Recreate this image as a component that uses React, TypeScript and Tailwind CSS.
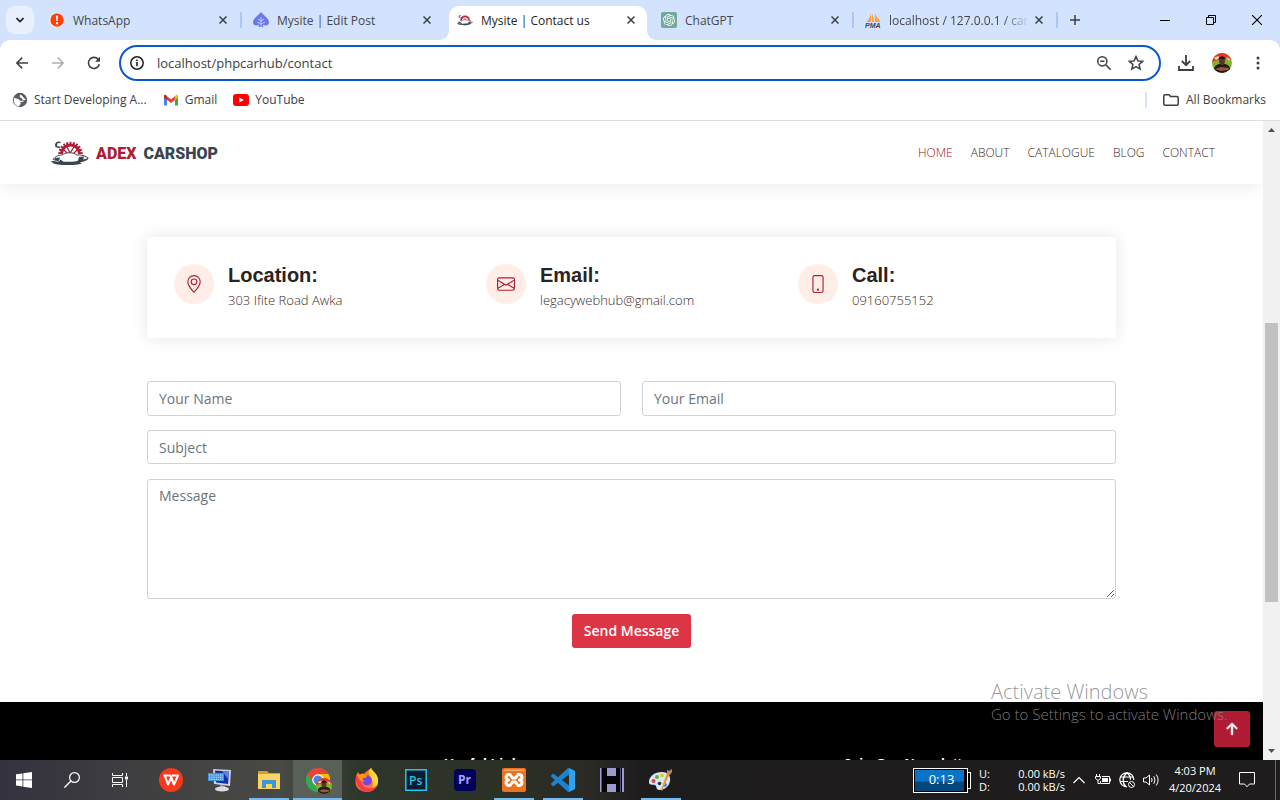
import type { ReactNode } from "react";
import { BsArrowUpShort, BsEnvelope, BsGeoAlt, BsPhone } from "react-icons/bs";
import { SiOpenai } from "react-icons/si";

/* ---------- shared drawings ---------- */

function CarLogo({ className }: { className: string }) {
  return (
    <svg viewBox="0 0 38 24" className={className} aria-hidden="true">
      <path d="M9 13a10.500 10.500 0 0 1 21 0" fill="none" stroke="#b01c33" strokeWidth="3.500" strokeDasharray="1.800 1.300" />
      <path d="M10.500 13a9 9 0 0 1 18 0" fill="none" stroke="#b01c33" strokeWidth="3" />
      <path d="M16 6l3 6 4-6M13 9l4 4M26 9l-4 4" fill="none" stroke="#b01c33" strokeWidth="1.300" />
      <path d="M9.500 1.500C6 .5 3.500 3 5.500 5.500M6 1.500l-1 4 4 1" fill="none" stroke="#3b4350" strokeWidth="1.400" />
      <path d="M1 20c0-4 5-6 9-6 4-3 12-3 16 0 5 0 9 1 11 3-2 3-5 4-9 4z" fill="#fff" />
      <path d="M2 19c1-3 5-5 9-5 4-3 11-3 15 0 4-.5 9 1 11 3" fill="none" stroke="#3b4350" strokeWidth="1" />
      <path d="M0 20c3 0 5 .3 8 .6l1.500-2.200 3 2.400c5 .2 10-.2 14-.9l2-2.200 2.500 1c3-.7 5-1.200 7-2.200-1 3-5 4-9 5l2 1c-8 2.300-21 2.300-29-.3z" fill="#3b4350" />
      <path d="M4 17l5-.5-1 3.500-5-.5zM28 16l5-.5-1 4-5 .5z" fill="#3b4350" />
    </svg>
  );
}

function Avatar({ className }: { className: string }) {
  return (
    <svg viewBox="0 0 20 20" className={className} aria-hidden="true">
      <clipPath id="round">
        <circle cx="10" cy="10" r="10" />
      </clipPath>
      <g clipPath="url(#round)">
        <path d="M0 0h20v20H0z" fill="#7fb52b" />
        <path d="M0 0h20v7l-6-2-5 1-9 3z" fill="#e5362c" />
        <path d="M2 5l4-2 2 2-4 2zM14 4l4 2-1 2z" fill="#f3c9bd" />
        <path d="M2 20c-1-5 1-8 5-9h6c5 1 6 5 5 9z" fill="#241a1c" />
        <path d="M3 16l6-2 8 1-1 2-7 1z" fill="#99583c" />
        <ellipse cx="10" cy="8" rx="3" ry="4" fill="#5e3426" />
        <path d="M6.500 7c0-5 7-5 7 0l-1-1h-5z" fill="#1c1213" />
      </g>
    </svg>
  );
}

/* ---------- browser chrome ---------- */

function CloseIcon() {
  return (
    <svg viewBox="0 0 8 8" className="size-2" aria-hidden="true">
      <path d="M.5.5l7 7M7.500.5l-7 7" stroke="#3c3f43" strokeWidth="1.500" />
    </svg>
  );
}

function WhatsAppAlert() {
  return (
    <svg viewBox="0 0 16 16" className="size-4">
      <circle cx="8" cy="8" r="7.500" fill="#fff" />
      <circle cx="8" cy="8" r="6.700" fill="#ff4008" />
      <path d="M7 3.500h2l-.3 5.500H7.300zM7 10.300h2v2H7z" fill="#fff" />
    </svg>
  );
}

function LeafIcon() {
  return (
    <svg viewBox="0 0 16 16" className="size-4">
      <path d="M8 0c1.500 2.500 8 6 8 10.200 0 3-3.500 4.300-6 2.600L10.500 15h-5l.5-2.200c-2.500 1.700-6 .4-6-2.600C0 6 6.500 2.500 8 0z" fill="#6a78e8" />
      <path d="M8 5v10M8 9L5 7M8 9l3-2M8 12l-4-2M8 12l4-2" stroke="#c6d0fb" strokeWidth=".9" fill="none" />
    </svg>
  );
}

function GptIcon() {
  return (
    <span className="flex size-4 items-center justify-center rounded-xs bg-[#74aa9c]">
      <SiOpenai className="size-3 text-white" />
    </span>
  );
}

function PmaIcon() {
  return (
    <svg viewBox="0 0 16 16" className="size-4">
      <path d="M6 1v9H1c3-2 4-5 5-9zM7 1c1 3 2 6 2 9H7zM10 2c2 2 3 5 3 8h-3zM13 5l2 5h-2z" fill="#f7a13c" />
      <text x="0" y="15.500" fontSize="7" fontWeight="700" fontStyle="italic" fontFamily="Liberation Sans, sans-serif" fill="#43425c">
        PMA
      </text>
    </svg>
  );
}

type TabInfo = { title: string; icon: ReactNode; active?: boolean; divider?: boolean; fade?: boolean };

const tabs: TabInfo[] = [
  { title: "WhatsApp", icon: <WhatsAppAlert />, divider: true },
  { title: "Mysite | Edit Post", icon: <LeafIcon /> },
  { title: "Mysite | Contact us", icon: <CarLogo className="h-3 w-4" />, active: true },
  { title: "ChatGPT", icon: <GptIcon />, divider: true },
  { title: "localhost / 127.0.0.1 / car", icon: <PmaIcon />, divider: true, fade: true },
];

function Tab({ tab }: { tab: TabInfo }) {
  return (
    <div className="relative flex max-w-[204px] min-w-0 flex-1 self-stretch px-[3px] pt-1.5">
      {tab.active && (
        <>
          <span className="absolute -right-[7px] bottom-0 size-2.5 bg-[radial-gradient(circle_at_100%_0,#d3e3fd_10px,#fff_10px)]" />
          <span className="absolute bottom-0 -left-[7px] size-2.5 bg-[radial-gradient(circle_at_0_0,#d3e3fd_10px,#fff_10px)]" />
        </>
      )}
      <div className={`flex min-w-0 flex-1 items-center px-2 pb-1.5 ${tab.active ? "rounded-t-[10px] bg-white text-[#1f1f1f]" : "text-[#44474b]"}`}>
        <span className="flex w-4 shrink-0 items-center justify-center">{tab.icon}</span>
        <span
          className={`ml-2 min-w-0 flex-1 pt-0.5 text-xs whitespace-nowrap ${tab.fade ? "[mask-image:linear-gradient(to_right,#000_80%,transparent)]" : ""}`}
        >
          {tab.title}
        </span>
        <button type="button" aria-label={`Close ${tab.title}`} className="flex size-4 shrink-0 items-center justify-center">
          <CloseIcon />
        </button>
      </div>
      {tab.divider && <span className="absolute top-3 right-0 h-4 w-0.5 bg-[#a8c7fa]" />}
    </div>
  );
}

function TabStrip() {
  return (
    <div className="flex h-10 shrink-0 items-center bg-[#d3e3fd] pl-1.5">
      <button type="button" aria-label="Search tabs" className="mr-1 flex size-7 items-center justify-center rounded-[9px] bg-[#e9f1fe]">
        <svg viewBox="0 0 8 6" className="h-1.5 w-2">
          <path d="M.5 1L4 4.500 7.500 1" fill="none" stroke="#1f1f1f" strokeWidth="1.600" />
        </svg>
      </button>
      {tabs.map((tab) => (
        <Tab key={tab.title} tab={tab} />
      ))}
      <button type="button" aria-label="New tab" className="ml-[7px] flex size-5 items-center justify-center">
        <svg viewBox="0 0 10 10" className="size-2.5">
          <path d="M5 0v10M0 5h10" stroke="#3c3f43" strokeWidth="1.500" />
        </svg>
      </button>
      <div className="ml-auto flex self-stretch">
        <button type="button" aria-label="Minimize" className="flex w-[46px] items-center justify-center">
          <svg viewBox="0 0 10 10" className="size-2.5">
            <path d="M0 5.500h10" stroke="#000" />
          </svg>
        </button>
        <button type="button" aria-label="Restore" className="flex w-[46px] items-center justify-center">
          <svg viewBox="0 0 10 10" className="size-2.5">
            <path d="M.5 2.500h7v7h-7zM2.500 2.500v-2h7v7h-2" fill="none" stroke="#000" />
          </svg>
        </button>
        <button type="button" aria-label="Close window" className="flex w-[46px] items-center justify-center">
          <svg viewBox="0 0 10 10" className="size-2.5">
            <path d="M0 0l10 10M10 0L0 10" stroke="#000" strokeWidth="1.100" />
          </svg>
        </button>
      </div>
    </div>
  );
}

function Toolbar() {
  return (
    <div className="bg-[#d3e3fd]">
      <div className="flex items-center rounded-t-[10px] bg-white pt-[5px] pr-2.5 pl-1.5">
        <button type="button" aria-label="Back" className="flex size-8 items-center justify-center">
          <svg viewBox="0 0 12 12" className="size-3">
            <path d="M12 6H1M6.200.6L.9 6l5.300 5.400" fill="none" stroke="#3c3f43" strokeWidth="1.500" />
          </svg>
        </button>
        <button type="button" aria-label="Forward" className="ml-1 flex size-8 items-center justify-center">
          <svg viewBox="0 0 12 12" className="size-3">
            <path d="M0 6h11M5.800.6L11.100 6l-5.300 5.400" fill="none" stroke="#aeb0b3" strokeWidth="1.500" />
          </svg>
        </button>
        <button type="button" aria-label="Reload" className="ml-1 flex size-8 items-center justify-center">
          <svg viewBox="0 0 14 14" className="size-3.5">
            <path d="M12.300 8.200A5.500 5.500 0 1 1 11.500 3.800" fill="none" stroke="#3c3f43" strokeWidth="1.600" />
            <path d="M13 .8v5H8z" fill="#3c3f43" />
          </svg>
        </button>
        <div className="ml-[9px] flex h-9 min-w-0 flex-1 items-center rounded-full border-2 border-[#0b57d0] pr-[11px] pl-[9px]">
          <svg viewBox="0 0 14 14" className="size-3.5 shrink-0" aria-hidden="true">
            <circle cx="7" cy="7" r="6.200" fill="none" stroke="#1f1f1f" strokeWidth="1.500" />
            <path d="M7 6v4.300M7 3.400V5" stroke="#1f1f1f" strokeWidth="1.600" />
          </svg>
          <input
            aria-label="Address"
            defaultValue="localhost/phpcarhub/contact"
            className="ml-[13px] block h-5 min-w-0 flex-1 bg-transparent text-[13px] leading-5 text-[#3c4043] outline-none"
          />
          <svg viewBox="0 0 16 16" className="size-4 shrink-0" aria-hidden="true">
            <circle cx="6.300" cy="6.300" r="4.600" fill="none" stroke="#3c3f43" strokeWidth="1.500" />
            <path d="M9.700 9.700l5 5M4.200 6.300h4.200" stroke="#3c3f43" strokeWidth="1.600" />
          </svg>
          <svg viewBox="0 0 16 16" className="mr-1 ml-4 size-4 shrink-0" aria-hidden="true">
            <path d="M8 1.600l1.900 4.300 4.700.5-3.500 3.100 1 4.600L8 11.700l-4.100 2.400 1-4.600L1.400 6.400l4.700-.5z" fill="none" stroke="#3c3f43" strokeWidth="1.500" />
          </svg>
        </div>
        <button type="button" aria-label="Downloads" className="ml-4 flex size-[18px] items-center justify-center">
          <svg viewBox="0 0 16 16" className="size-4">
            <path d="M8 0v10M3.800 6L8 10.200 12.200 6M1 11v4h14v-4" fill="none" stroke="#3c3f43" strokeWidth="1.800" />
          </svg>
        </button>
        <button type="button" aria-label="Profile" className="ml-[17px]">
          <Avatar className="size-5" />
        </button>
        <button type="button" aria-label="Menu" className="ml-3.5 flex h-5 w-6 items-center justify-center">
          <svg viewBox="0 0 4 14" className="h-3.5 w-1">
            <circle cx="2" cy="2" r="1.500" fill="#3c3f43" />
            <circle cx="2" cy="7" r="1.500" fill="#3c3f43" />
            <circle cx="2" cy="12" r="1.500" fill="#3c3f43" />
          </svg>
        </button>
      </div>
    </div>
  );
}

function Bookmarks() {
  return (
    <div className="flex h-10 shrink-0 items-center border-b border-[#dedfe1] bg-white pr-3.5 pb-0.5 pl-3 text-xs text-[#3c3f43]">
      <a href="#start" className="flex items-center gap-1.5">
        <svg viewBox="0 0 16 16" className="size-4" aria-hidden="true">
          <circle cx="8" cy="8" r="7.200" fill="#5a5d61" />
          <path d="M2.500 6.500l3.500 1c1 .3 1 1.500 2 1.700v2.600l-1.500 2C4 13 2 10.500 2.500 6.500zM9 2.800c-1.500 1.500-.5 2.500 1 2.700.8.600.5 2 2 2.200l1.500-.2M8.500 9.500l3-.3" fill="#fff" stroke="#fff" strokeWidth="1.200" />
        </svg>
        Start Developing A...
      </a>
      <a href="#gmail" className="ml-4 flex items-center gap-1.5">
        <svg viewBox="0 0 16 12" className="h-3 w-4" aria-hidden="true">
          <path d="M1 2v9.500h3V5z" fill="#4285f4" />
          <path d="M15 2v9.500h-3V5z" fill="#34a853" />
          <path d="M12 2.200V6l3-2.300V2c0-1.400-1.600-2.100-3 0z" fill="#fbbc04" />
          <path d="M4 2.200l4 3 4-3V6L8 9 4 6z" fill="#ea4335" />
          <path d="M4 2.200V6L1 3.700V2C1 .6 2.600-.1 4 2.200z" fill="#c5221f" />
        </svg>
        Gmail
      </a>
      <a href="#youtube" className="ml-4 flex items-center gap-1.5">
        <svg viewBox="0 0 16 12" className="h-3 w-4" aria-hidden="true">
          <rect width="16" height="12" rx="3" fill="#f00" />
          <path d="M6.300 3.400v5.200L10.800 6z" fill="#fff" />
        </svg>
        YouTube
      </a>
      <span className="ml-auto h-4 w-0.5 bg-[#d3e3fd]" />
      <button type="button" className="ml-4 flex items-center gap-[7px]">
        <svg viewBox="0 0 16 12" className="h-3 w-4" aria-hidden="true">
          <path d="M.8 10V2Q.8.800 2 .8h4l1.500 1.700H14q1.200 0 1.200 1.200V10q0 1.200-1.200 1.200H2Q.8 11.200.8 10z" fill="none" stroke="#3c3f43" strokeWidth="1.500" />
        </svg>
        All Bookmarks
      </button>
    </div>
  );
}

/* ---------- website ---------- */

const links = ["HOME", "ABOUT", "CATALOGUE", "BLOG", "CONTACT"];

const contacts = [
  { label: "Location:", value: "303 Ifite Road Awka", Icon: BsGeoAlt },
  { label: "Email:", value: "legacywebhub@gmail.com", Icon: BsEnvelope },
  { label: "Call:", value: "09160755152", Icon: BsPhone },
];

const field =
  "block w-full rounded-[3px] border border-[#ced4da] bg-white px-[11px] text-sm text-[#212529] placeholder:text-[#6c757d] outline-none";

function Site() {
  return (
    <div className="relative flex min-w-0 flex-1 flex-col overflow-hidden bg-white font-['Open_Sans','Noto_Sans',sans-serif]">
      <header className="flex h-[63px] shrink-0 items-center justify-between pr-12 pl-[51px] shadow-[0_0_20px_rgba(0,0,0,0.1)]">
        <a href="#home" className="flex items-center gap-[7px]">
          <CarLogo className="h-6 w-[38px]" />
          <span className="flex gap-[7px] pt-0.5 font-['Roboto',sans-serif] text-base leading-5 font-black text-[#3b4350]">
            <span className="text-[#b01c33]">ADEX</span>
            <span>CARSHOP</span>
          </span>
        </a>
        <nav className="flex gap-[18px] text-xs font-light">
          {links.map((link, i) => (
            <a key={link} href={`#${link.toLowerCase()}`} className={i === 0 ? "text-[#a80f28]" : "text-[#3a2a25]"}>
              {link}
            </a>
          ))}
        </nav>
      </header>

      <main className="mx-auto w-full max-w-[969px] pt-[53px] pb-[54px]">
        <section className="grid grid-cols-3 pt-[27px] pr-1.5 pb-[26px] pl-[27px] shadow-[0_0_16px_rgba(0,0,0,0.1)]">
          {contacts.map(({ label, value, Icon }) => (
            <div key={label} className="flex gap-3.5">
              <span className="flex size-10 shrink-0 items-center justify-center rounded-full bg-[#ffeee8] text-[#b01c33]">
                <Icon className="size-[18px]" />
              </span>
              <div>
                <h4 className="font-['Liberation_Sans',sans-serif] text-xl leading-[22px] font-bold text-[#2b2320]">{label}</h4>
                <p className="pt-0.5 text-[13px] leading-6 font-light text-[#3a2a25]">{value}</p>
              </div>
            </div>
          ))}
        </section>

        <form className="mt-[43px]" onSubmit={(e) => e.preventDefault()}>
          <div className="grid grid-cols-2 gap-[21px]">
            <input aria-label="Your Name" placeholder="Your Name" className={`${field} h-[35px]`} />
            <input aria-label="Your Email" type="email" placeholder="Your Email" className={`${field} h-[35px]`} />
          </div>
          <input aria-label="Subject" placeholder="Subject" className={`${field} mt-3.5 h-[34px]`} />
          <textarea aria-label="Message" placeholder="Message" className={`${field} mt-[15px] h-[120px] resize-y py-1.5`} />
          <button type="submit" className="mx-auto mt-[15px] block h-[34px] rounded-[3px] bg-[#dc3545] px-3 text-sm font-semibold text-white">
            Send Message
          </button>
        </form>
      </main>

      <footer className="flex-1 bg-black font-['Liberation_Sans',sans-serif] text-sm leading-4 font-bold text-white">
        <div className="mx-auto grid w-full max-w-[969px] grid-cols-[297px_399px_1fr] pt-[54px]">
          <span />
          <h4>Useful Links</h4>
          <h4>Join Our Newsletter</h4>
        </div>
      </footer>

      <a href="#top" aria-label="Back to top" className="absolute right-[13px] bottom-[13px] flex size-9 items-center justify-center rounded-[3px] bg-[#b01c33] text-white">
        <BsArrowUpShort className="size-6 stroke-white stroke-[0.5]" />
      </a>
    </div>
  );
}

function ScrollBar() {
  return (
    <div className="flex w-[17px] shrink-0 flex-col items-center bg-[#f1f1f1]" aria-hidden="true">
      <span className="flex h-[17px] items-center">
        <svg viewBox="0 0 7 4" className="h-1 w-[7px]">
          <path d="M0 4l3.500-4L7 4z" fill="#505050" />
        </svg>
      </span>
      <span className="grow-[185]" />
      <span className="w-[13px] grow-[280] bg-[#c1c1c1]" />
      <span className="grow-[141]" />
      <span className="flex h-[17px] items-center">
        <svg viewBox="0 0 7 4" className="h-1 w-[7px]">
          <path d="M0 0l3.500 4L7 0z" fill="#505050" />
        </svg>
      </span>
    </div>
  );
}

/* ---------- taskbar ---------- */

const svgText = "Open Sans, Noto Sans, sans-serif";

const apps: { name: string; open?: boolean; active?: boolean; icon: ReactNode }[] = [
  {
    name: "WPS Office",
    icon: (
      <svg viewBox="0 0 24 24" className="size-6">
        <circle cx="12" cy="12" r="12" fill="#f9391c" />
        <path d="M4.500 7.500h7l2.500 6M6 8l3 8.500L12 10l3 6.500L19 7.500h-6" fill="none" stroke="#fff" strokeWidth="2" strokeLinejoin="round" />
      </svg>
    ),
  },
  {
    name: "On-screen keyboard",
    icon: (
      <svg viewBox="0 0 24 24" className="size-6">
        <path d="M5 1l18 1-1 16-16-2z" fill="#cfd3dc" />
        <path d="M7 2.500l14 1-1 12.500-12-1.500z" fill="#1531a8" />
        <path d="M14 3l7 .5-.5 8z" fill="#5c83ea" />
        <path d="M12 17l5 1v2l-5-1z" fill="#a9adb5" />
        <ellipse cx="14" cy="21" rx="7" ry="2.500" fill="#d9dbe0" />
        <path d="M0 5h16v8H0z" fill="#3d8fd6" />
        <path d="M1 7h14M1 9.200h14M1 11.300h14" stroke="#cfe6fa" strokeWidth="1" strokeDasharray="1.500 .7" />
      </svg>
    ),
  },
  {
    name: "File Explorer",
    open: true,
    icon: (
      <svg viewBox="0 0 22 20" className="h-5 w-[22px]">
        <path d="M0 1h9l2 2h11v5H0z" fill="#d9a020" />
        <path d="M0 4h22v15H0z" fill="#fcd462" />
        <path d="M4 18v-8h14v8h-4v-4H8v4z" fill="#3c95dd" />
      </svg>
    ),
  },
  {
    name: "Google Chrome",
    open: true,
    active: true,
    icon: (
      <span className="relative size-6">
        <svg viewBox="0 0 24 24" className="size-6">
          <circle cx="12" cy="12" r="12" fill="#34a853" />
          <path d="M12 12L1.600 6A12 12 0 0 1 22.400 6z" fill="#ea4335" />
          <path d="M12 12V6h10.400A12 12 0 0 1 12 24z" fill="#fbbc05" />
          <path d="M1.600 6L7 15l5-3V6z" fill="#ea4335" />
          <path d="M1.600 6L7 15l5 1-3 7.600A12 12 0 0 1 1.600 6z" fill="#34a853" />
          <circle cx="12" cy="12" r="5.800" fill="#fff" />
          <circle cx="12" cy="12" r="4.600" fill="#4285f4" />
        </svg>
        <Avatar className="absolute top-2.5 left-2.5 size-4" />
      </span>
    ),
  },
  {
    name: "Firefox",
    icon: (
      <svg viewBox="0 0 24 24" className="size-6">
        <path d="M1 8l2-4 2 3 3-2 1 1c2-3 5-4 7-6 1 3 6 5 7 11 1 8-5 13-11 13S0 20 .5 13z" fill="#ff7a1f" />
        <path d="M16 0c1 3 6 5 7 11 1 8-5 12-10 12 5-2 6-7 4-11-1-4-4-5-3-9z" fill="#ffd43c" />
        <path d="M1 8c-1 6 2 15 11 16 5 0 9-3 10-7-3 4-12 5-15-1L5 9z" fill="#fa3a50" />
        <circle cx="12" cy="12.500" r="5" fill="#7b45e6" />
        <path d="M3 7c3-2 7-1 9 1-1 2-3 2-4 2-1 1 0 3 2 4-4 0-7-3-7-7z" fill="#ff980e" />
      </svg>
    ),
  },
  {
    name: "Photoshop",
    icon: (
      <svg viewBox="0 0 22 22" className="size-[22px]">
        <path d="M.8.800h20.400v20.400H.8z" fill="#0b1c2c" stroke="#26c4ef" strokeWidth="1.500" />
        <text x="4" y="15.500" fontSize="12" fontWeight="600" fontFamily={svgText} fill="#26c4ef">Ps</text>
      </svg>
    ),
  },
  {
    name: "Premiere Pro",
    icon: (
      <svg viewBox="0 0 22 22" className="size-[22px]">
        <rect width="22" height="22" rx="4" fill="#00005b" />
        <text x="4" y="15" fontSize="12" fontWeight="700" fontFamily={svgText} fill="#a9a4ff">Pr</text>
      </svg>
    ),
  },
  {
    name: "XAMPP",
    open: true,
    icon: (
      <svg viewBox="0 0 24 24" className="size-6">
        <rect width="24" height="24" rx="2" fill="#ee7320" />
        <path d="M2 1.500h20v1.500H2z" fill="#f9a86b" />
        <path d="M8 6.500c-5-.5-5 5-1.500 5.500-3.500.5-3.500 6 1.500 5.500l2.500-3.500h3l2.500 3.500c5 .5 5-5 1.500-5.500 3.500-.5 3.500-6-1.500-5.500L13.500 10h-3z" fill="none" stroke="#fff" strokeWidth="3" strokeLinejoin="round" />
      </svg>
    ),
  },
  {
    name: "Visual Studio Code",
    open: true,
    icon: (
      <svg viewBox="0 0 24 24" className="size-6">
        <path
          d="M23.150 2.587L18.210.21a1.494 1.494 0 0 0-1.705.29l-9.460 8.630-4.120-3.128a.999.999 0 0 0-1.276.057L.327 7.261A1 1 0 0 0 .326 8.740L3.899 12 .326 15.260a1 1 0 0 0 .001 1.479L1.650 17.940a.999.999 0 0 0 1.276.057l4.120-3.128 9.460 8.630a1.492 1.492 0 0 0 1.704.29l4.942-2.377A1.500 1.500 0 0 0 24 20.060V3.939a1.500 1.500 0 0 0-.85-1.352zm-5.146 14.861L10.826 12l7.178-5.448v10.896z"
          fill="#1b83cf"
        />
        <path d="M18 .2l5.200 2.400q.8.400.8 1.300v16.200q0 .9-.8 1.300L18 23.800z" fill="#30a2ee" />
      </svg>
    ),
  },
  {
    name: "HTTrack",
    icon: (
      <svg viewBox="0 0 24 24" className="size-6">
        <path d="M0 0h24v24H0z" fill="#050509" />
        <path d="M0 0h1v24H0zM7 0h9v8H7zM7 16h9v8H7zM22 0h2v24h-2z" fill="#9c9bd0" />
        <path d="M1 0h1v24H1zM20 0h1v24h-1z" fill="#55557a" />
      </svg>
    ),
  },
  {
    name: "Paint",
    open: true,
    icon: (
      <svg viewBox="0 0 24 24" className="size-6">
        <path d="M13 4c6 0 9 4 8 9-1 6-6 9-11 9-3 0-2-4-4-5s-6 1-6-3c0-6 6-10 13-10z" fill="#d6e8f4" />
        <circle cx="4.500" cy="13" r="2" fill="#e8413c" />
        <circle cx="8" cy="9" r="2" fill="#4fb548" />
        <circle cx="13" cy="7.500" r="2" fill="#f0c52b" />
        <circle cx="10.500" cy="15.500" r="1.800" fill="#2b3036" />
        <circle cx="16" cy="17" r="2" fill="#3f8fe0" />
        <path d="M21 5L13 23l-1-1 6-17z" fill="#e8962c" />
        <path d="M18 2l2 1 3-2v3l-2 3-3-1z" fill="#b98a62" />
      </svg>
    ),
  },
];

function Taskbar() {
  return (
    <div className="flex h-10 shrink-0 items-stretch bg-[linear-gradient(to_right,#33323f_0,#434241_14%,#484a45_22%,#2f362b_28%,#2b3025_40%,#2c2a26_46%,#1e1d1d_50%,#1e1c1c_100%)] text-white">
      <button type="button" aria-label="Start" className="flex w-12 items-center justify-center">
        <svg viewBox="0 0 16 16" className="size-4">
          <path d="M0 2.300L6.500 1.400v6.100H0zM7.300 1.300L16 0v7.500H7.300zM0 8.300h6.500v6.200L0 13.600zM7.300 8.300H16V16l-8.700-1.300z" fill="#fff" />
        </svg>
      </button>
      <button type="button" aria-label="Search" className="flex w-12 items-center justify-center">
        <svg viewBox="0 0 16 16" className="size-4">
          <circle cx="10.500" cy="5.500" r="4.900" fill="none" stroke="#fff" strokeWidth="1.200" />
          <path d="M7 9L.4 15.600" stroke="#fff" strokeWidth="1.300" />
        </svg>
      </button>
      <button type="button" aria-label="Task view" className="flex w-12 items-center justify-center">
        <svg viewBox="0 0 16 16" className="size-4">
          <path d="M.5 1v2.500h10V1M.5 15v-2.500h10V15M.5 5.500h10v5H.5zM14.500 1v3M14.500 8v7" fill="none" stroke="#fff" />
          <path d="M13 4.500h3v3h-3z" fill="#fff" />
        </svg>
      </button>
      <div className="ml-0.5 flex">
        {apps.map((app) => (
          <button
            key={app.name}
            type="button"
            aria-label={app.name}
            className={`flex w-[49px] flex-col items-center ${app.active ? "bg-[#596058]" : ""}`}
          >
            <span className="flex flex-1 items-center">{app.icon}</span>
            <span className={`-mt-0.5 h-0.5 ${app.active ? "w-full" : "w-10"} ${app.open ? "bg-[#76b9ed]" : ""}`} />
          </button>
        ))}
      </div>
      <div className="ml-auto flex items-center">
        <div className="flex items-center">
          <span className="flex h-[25px] w-[55px] items-center border border-white bg-black p-px">
            <span className="flex h-full w-[49px] items-center justify-center bg-linear-to-b from-[#0a74c8] from-50% to-[#04477c] to-60% pl-1 text-[13px]">0:13</span>
          </span>
          <span className="h-[17px] w-[3px] border border-l-0 border-white bg-black" />
        </div>
        <div className="ml-2 w-[86px] text-[11px] leading-[13px]">
          <div className="flex justify-between"><span>U:</span><span>0.00 kB/s</span></div>
          <div className="flex justify-between"><span>D:</span><span>0.00 kB/s</span></div>
        </div>
        <svg viewBox="0 0 12 8" className="ml-2 h-2 w-3" aria-hidden="true">
          <path d="M.5 7L6 1.500 11.500 7" fill="none" stroke="#fff" strokeWidth="1.200" />
        </svg>
        <svg viewBox="0 0 16 12" className="ml-2.5 h-3 w-4" aria-hidden="true">
          <path d="M1.500 0v2M4.500 0v2M.5 2.500h5v2l-2 1.500h-1l-2-1.500zM3 6v3.500h2M7 2.500h7.500v7H5.500V7" fill="none" stroke="#fff" />
          <path d="M7 4h6v4H7zM15 4.500h1v3h-1z" fill="#fff" />
        </svg>
        <svg viewBox="0 0 16 16" className="ml-2 size-4" aria-hidden="true">
          <path d="M14.800 8A7 7 0 1 0 8 14.800M8 .8C3 5 3 11 7 14.800M8 .8c2.500 2 3.500 4.500 3.500 7M1.500 5h13M1 9.500h8" fill="none" stroke="#fff" strokeWidth="1.200" />
          <circle cx="12.500" cy="12.500" r="3" fill="none" stroke="#fff" />
          <path d="M10.500 10.500l4 4" stroke="#fff" />
        </svg>
        <svg viewBox="0 0 17 14" className="ml-2 h-3.5 w-[17px]" aria-hidden="true">
          <path d="M.5 5h2.500l3.500-3v10L3 9H.5zM8.500 5q1.200 2 0 4M10.800 3.200q2.400 3.800 0 7.600M13.300 1.500q3.600 5.500 0 11" fill="none" stroke="#fff" />
        </svg>
        <div className="ml-2 w-[54px] pb-0.5 text-center text-[11px] leading-[17px] whitespace-nowrap">
          <div>4:03 PM</div>
          <div>4/20/2024</div>
        </div>
        <svg viewBox="0 0 16 16" className="ml-[17px] size-4" aria-hidden="true">
          <path d="M.5.500h15v11.500h-5L8 14.800 5.500 12h-5z" fill="none" stroke="#fff" />
        </svg>
        <span className="mr-1 ml-5 h-10 w-px bg-[#6b6a6a]" />
      </div>
    </div>
  );
}

export default function App() {
  return (
    <div className="relative flex h-screen flex-col overflow-hidden bg-white font-['Open_Sans','Noto_Sans',sans-serif]">
      <TabStrip />
      <Toolbar />
      <Bookmarks />
      <div className="flex min-h-0 flex-1">
        <Site />
        <ScrollBar />
      </div>
      <Taskbar />
      <div className="pointer-events-none absolute right-[53px] bottom-[76px] w-[236px] font-light whitespace-nowrap text-[#8c8c8c]/90">
        <p className="text-xl leading-6">Activate Windows</p>
        <p className="text-[15px] leading-5">Go to Settings to activate Windows.</p>
      </div>
    </div>
  );
}
